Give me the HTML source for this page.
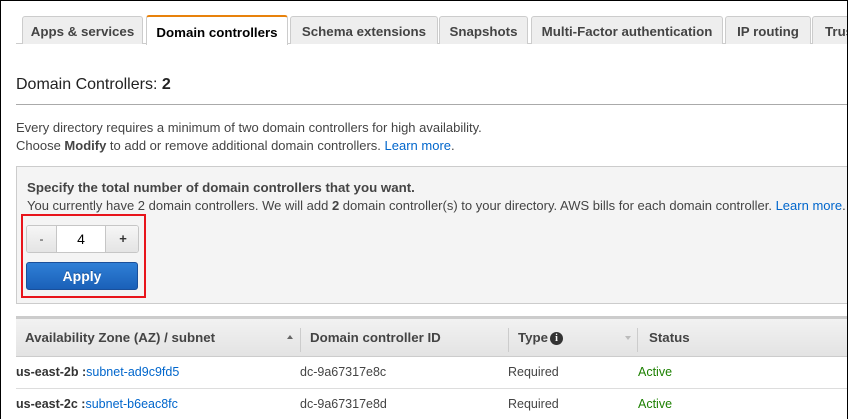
<!DOCTYPE html>
<html><head><style>
*{box-sizing:border-box;margin:0;padding:0}
html,body{width:849px;height:419px;overflow:hidden;background:#fff}
body{font-family:"Liberation Sans",Arial,sans-serif;color:#333;position:relative}
.abs{position:absolute}
.tab{position:absolute;top:16px;height:28px;background:#eee;border:1px solid #ccc;border-bottom:none;border-radius:3px 3px 0 0;font-size:13.3px;font-weight:bold;color:#444;text-align:center;line-height:29px;white-space:nowrap;overflow:hidden}
.tab.act{background:#fff;color:#000;border-top:2px solid #e8820c;top:15px;height:30px;line-height:31px}
a{color:#0066cc;text-decoration:none}
.t{font-size:13px;color:#444}
.hd{font-size:13.3px;font-weight:bold;color:#444;position:absolute;top:330px}
.cell{position:absolute;font-size:12.5px}
</style></head><body>
<div class="abs" style="left:16px;top:43px;width:840px;height:1px;background:#ccc"></div>
<div class="tab" style="left:22px;width:121px">Apps &amp; services</div>
<div class="tab act" style="left:146px;width:142px">Domain controllers</div>
<div class="tab" style="left:290px;width:148px">Schema extensions</div>
<div class="tab" style="left:439px;width:89px">Snapshots</div>
<div class="tab" style="left:531px;width:192px">Multi-Factor authentication</div>
<div class="tab" style="left:725px;width:86px">IP routing</div>
<div class="tab" style="left:812px;width:60px;text-align:left;padding-left:12px">Trust</div>

<div class="abs" style="left:16px;top:76px;font-size:16px;color:#222">Domain Controllers: <b>2</b></div>
<div class="abs" style="left:16px;top:104px;width:840px;height:1px;background:#aaa"></div>
<div class="abs t" style="left:16px;top:119px;line-height:18px">Every directory requires a minimum of two domain controllers for high availability.<br>Choose <b>Modify</b> to add or remove additional domain controllers. <a>Learn more</a>.</div>

<div class="abs" style="left:16px;top:166px;width:840px;height:138px;background:#f4f4f4;border:1px solid #ccc"></div>
<div class="abs t" style="left:27px;top:180px;font-size:13.3px;font-weight:bold;color:#444">Specify the total number of domain controllers that you want.</div>
<div class="abs t" style="left:27px;top:198px">You currently have 2 domain controllers. We will add <b>2</b> domain controller(s) to your directory. AWS bills for each domain controller. <a>Learn more</a>.</div>
<div class="abs" style="left:21px;top:214px;width:125px;height:84px;border:2px solid #e8141b"></div>
<div class="abs" style="left:26px;top:225px;width:113px;height:28px;border:1px solid #c6c6c6;border-radius:3px;background:#fff;overflow:hidden">
 <div class="abs" style="left:0;top:0;width:30px;height:26px;background:linear-gradient(#f6f6f6,#e4e4e4);border-right:1px solid #c6c6c6;text-align:center;line-height:26px;font-size:12px">-</div>
 <div class="abs" style="left:30px;top:0;width:48px;height:26px;text-align:center;line-height:26px;font-size:14px;color:#000">4</div>
 <div class="abs" style="left:78px;top:0;width:35px;height:26px;background:linear-gradient(#f6f6f6,#e4e4e4);border-left:1px solid #c6c6c6;text-align:center;line-height:26px;font-size:13px;font-weight:bold">+</div>
</div>
<div class="abs" style="left:26px;top:262px;width:112px;height:28px;border:1px solid #1a4f9a;border-radius:3px;background:linear-gradient(#2f7fd6,#1a60b8);color:#fff;font-weight:bold;font-size:14px;text-align:center;line-height:26px;text-shadow:0 -1px 0 #134a8e">Apply</div>

<div class="abs" style="left:16px;top:316px;width:840px;height:3px;background:#ccc"></div>
<div class="abs" style="left:16px;top:319px;width:840px;height:38px;background:linear-gradient(#f2f2f2,#e3e3e3);border-bottom:1px solid #ccc"></div>
<div class="hd" style="left:25px">Availability Zone (AZ) / subnet</div>
<div class="abs" style="left:287px;top:335px;border-left:3.5px solid transparent;border-right:3.5px solid transparent;border-bottom:4px solid #666"></div>
<div class="abs" style="left:300px;top:328px;width:1px;height:24px;background:#ccc"></div>
<div class="hd" style="left:310px">Domain controller ID</div>
<div class="abs" style="left:508px;top:328px;width:1px;height:24px;background:#ccc"></div>
<div class="hd" style="left:518px">Type</div>
<div class="abs" style="left:550px;top:332px;width:13px;height:13px;border-radius:50%;background:#333;color:#fff;font-size:10px;font-weight:bold;text-align:center;line-height:13px;font-family:'Liberation Serif',serif">i</div>
<div class="abs" style="left:625px;top:336px;border-left:3.5px solid transparent;border-right:3.5px solid transparent;border-top:4px solid #bbb"></div>
<div class="abs" style="left:637px;top:328px;width:1px;height:24px;background:#ccc"></div>
<div class="hd" style="left:649px">Status</div>

<div class="cell" style="left:16px;top:365px;color:#333"><b>us-east-2b :</b><a>subnet-ad9c9fd5</a></div>
<div class="cell" style="left:300px;top:365px;color:#444">dc-9a67317e8c</div>
<div class="cell" style="left:508px;top:365px;color:#444">Required</div>
<div class="cell" style="left:638px;top:365px;color:#1d8102">Active</div>
<div class="abs" style="left:16px;top:388px;width:840px;height:1px;background:#ddd"></div>
<div class="cell" style="left:16px;top:397px;color:#333"><b>us-east-2c :</b><a>subnet-b6eac8fc</a></div>
<div class="cell" style="left:300px;top:397px;color:#444">dc-9a67317e8d</div>
<div class="cell" style="left:508px;top:397px;color:#444">Required</div>
<div class="cell" style="left:638px;top:397px;color:#1d8102">Active</div>

<div class="abs" style="left:0;top:0;width:848px;height:420px;border:1px solid #000;border-bottom:none"></div>
<div class="abs" style="left:848px;top:0;width:1px;height:419px;background:#fff"></div>
</body></html>
